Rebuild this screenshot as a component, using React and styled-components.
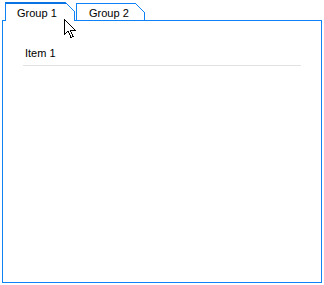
import React from "react";
import styled, { createGlobalStyle, css } from "styled-components";

const Global = createGlobalStyle`
  html, body { margin: 0; padding: 0; background: #ffffff; }
  body { font-family: "Liberation Sans", Arial, sans-serif; font-size: 11px; color: #000; }
`;

const BLUE = "#0f82f5";
const BLUE_DARK = "#0a72e2";

const Page = styled.div`
  position: relative;
  padding: 2px 0 0 2px;
  width: 320px;
`;

const TabStrip = styled.div`
  display: flex;
  align-items: flex-end;
  gap: 1px;
  padding-left: 3px;
  height: 18px;
`;

const Tab = styled.div`
  position: relative;
  box-sizing: border-box;
  width: ${(p) => p.$w}px;
  padding-left: ${(p) => p.$pl}px;
  line-height: 13px;
  background: #fff;
  border-left: 1px solid ${BLUE};
  border-right: 1px solid ${BLUE};
  white-space: nowrap;
  ${(p) =>
    p.$active
      ? css`
          height: 19px;
          margin-bottom: -1px;
          border-top: 2px solid ${BLUE_DARK};
          padding-top: 3px;
          z-index: 1;
        `
      : css`
          height: 17px;
          border-top: 1px solid ${BLUE};
          padding-top: 3px;
        `}
  &::after {
    content: "";
    position: absolute;
    top: ${(p) => (p.$active ? -2 : -1)}px;
    right: -1px;
    width: 10px;
    height: 10px;
    background: linear-gradient(
      45deg,
      transparent calc(50% - 0.7px),
      ${BLUE} calc(50% - 0.7px),
      ${BLUE} calc(50% + 0.7px),
      #ffffff calc(50% + 0.7px)
    );
  }
`;

const Panel = styled.div`
  box-sizing: border-box;
  width: 320px;
  height: 263px;
  border: 1px solid ${BLUE};
  padding: 26px 20px 0 20px;
`;

const Item = styled.div`
  line-height: 13px;
  padding: 0 0 5px 2px;
  border-bottom: 1px solid #e2e2e2;
`;

const Cursor = styled.svg`
  position: absolute;
  left: 63px;
  top: 18px;
  pointer-events: none;
  z-index: 5;
`;

export default function App() {
  return (
    <>
      <Global />
      <Page>
        <TabStrip>
          <Tab $active $w={70} $pl={11}>Group 1</Tab>
          <Tab $w={69} $pl={12}>Group 2</Tab>
        </TabStrip>
        <Panel>
          <Item>Item 1</Item>
        </Panel>
        <Cursor width="13" height="21" viewBox="0 0 13 21">
          <path
            d="M1.5 1.5 L1.5 16.5 L5 13 L8 19.5 L10 18.5 L7.2 12.2 L12 12.2 Z"
            fill="#fff"
            stroke="#000"
            strokeWidth="1"
            shapeRendering="crispEdges"
          />
        </Cursor>
      </Page>
    </>
  );
}
